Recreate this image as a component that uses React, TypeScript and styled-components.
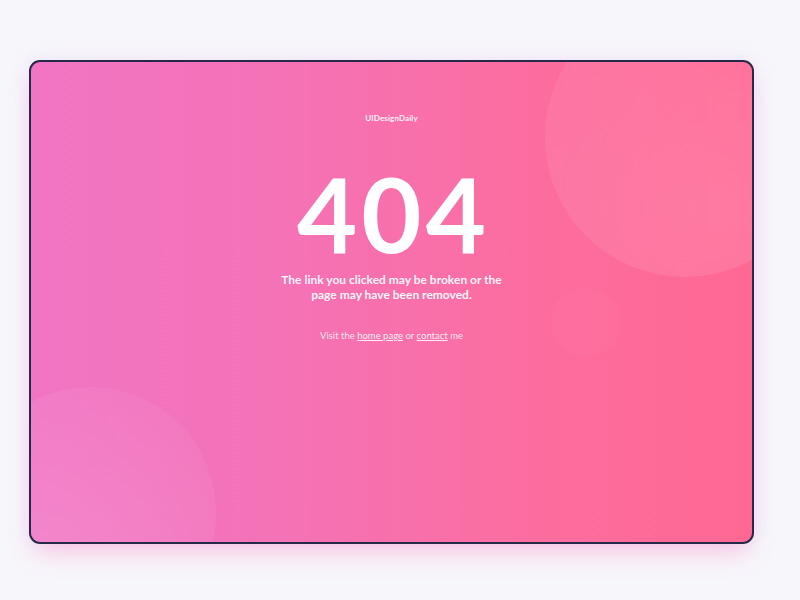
import React from "react";
import styled, { createGlobalStyle } from "styled-components";

const Global = createGlobalStyle`
  html, body { margin: 0; padding: 0; background: #f7f6fb; }
  body { font-family: Lato, "Open Sans", sans-serif; }
`;

const Page = styled.div`
  width: 800px;
  height: 600px;
  box-sizing: border-box;
  padding: 60px 0 0 29px;
`;

const Card = styled.div`
  position: relative;
  box-sizing: border-box;
  width: 725px;
  height: 484px;
  border: 2.5px solid #262a48;
  border-radius: 11px;
  overflow: hidden;
  background: linear-gradient(90deg, #f175c4 0%, #f472b6 35%, #fc6d9f 70%, #ff6893 100%);
  box-shadow: 0 14px 24px -6px rgba(255, 120, 190, 0.35), 0 0 18px rgba(220, 200, 240, 0.35);
  display: flex;
  flex-direction: column;
  align-items: center;
`;

const Circle = styled.div<{ $size: number; $bg: string }>`
  position: absolute;
  width: ${(p) => p.$size}px;
  height: ${(p) => p.$size}px;
  border-radius: 50%;
  background: ${(p) => p.$bg};
  pointer-events: none;
`;

const Brand = styled.div`
  position: relative;
  margin-top: 51px;
  font-size: 8px;
  font-weight: 700;
  color: rgba(255, 255, 255, 0.92);
  letter-spacing: 0.1px;
`;

const Code = styled.h1`
  position: relative;
  margin: 49px 0 0;
  font-size: 104px;
  line-height: 82px;
  font-weight: 700;
  color: #ffffff;
  letter-spacing: 4px;
  padding-left: 4px;
`;

const Message = styled.p`
  position: relative;
  margin: 19px 0 0;
  width: 232px;
  text-align: center;
  font-size: 12px;
  line-height: 14.5px;
  font-weight: 700;
  color: rgba(255, 255, 255, 0.95);
`;

const Visit = styled.p`
  position: relative;
  margin: 28px 0 0;
  font-size: 9.5px;
  color: rgba(255, 255, 255, 0.85);
`;

const Link = styled.a`
  color: rgba(255, 255, 255, 0.9);
  text-decoration: underline;
  text-underline-offset: 1px;
`;

export default function App() {
  return (
    <>
      <Global />
      <Page>
        <Card>
          <Circle
            $size={280}
            $bg="radial-gradient(circle at 60% 75%, rgba(255, 160, 190, 0.3), rgba(255, 150, 180, 0.14))"
            style={{ left: 514, top: -65 }}
          />
          <Circle
            $size={70}
            $bg="rgba(255, 140, 180, 0.09)"
            style={{ left: 520, top: 225 }}
          />
          <Circle
            $size={250}
            $bg="radial-gradient(circle at 25% 85%, rgba(245, 170, 220, 0.38), rgba(245, 150, 210, 0.06))"
            style={{ left: -65, top: 325 }}
          />
          <Brand>UIDesignDaily</Brand>
          <Code>404</Code>
          <Message>
            The link you clicked may be broken or the page may have been removed.
          </Message>
          <Visit>
            Visit the <Link href="#">home page</Link> or <Link href="#">contact</Link> me
          </Visit>
        </Card>
      </Page>
    </>
  );
}
